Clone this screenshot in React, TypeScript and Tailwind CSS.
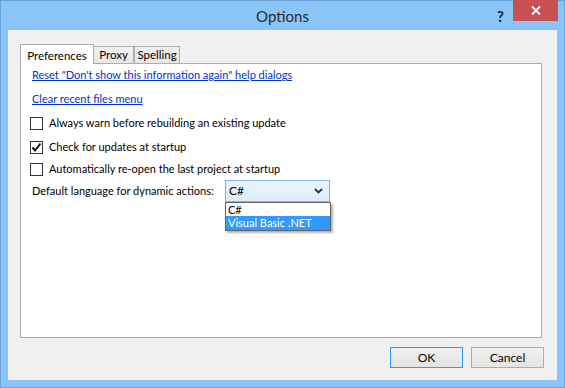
import { useState } from "react";

type CheckProps = {
  label: string;
  checked: boolean;
  onToggle: () => void;
};

const CheckRow = ({ label, checked, onToggle }: CheckProps) => {
  return (
    <div className="flex items-center gap-[6px] -ml-[2px] cursor-default" onClick={onToggle}>
      <div className="w-[13px] h-[13px] border border-[#333333] bg-white flex items-center justify-center">
        {checked && (
          <svg width="11" height="11" viewBox="0 0 11 11">
            <path d="M1.5 5.5 L4 8.5 L9.5 1.5" fill="none" stroke="#111" strokeWidth="2" />
          </svg>
        )}
      </div>
      <span>{label}</span>
    </div>
  );
};

const App = () => {
  const [checks, setChecks] = useState([false, true, false]);
  const labels = [
    "Always warn before rebuilding an existing update",
    "Check for updates at startup",
    "Automatically re-open the last project at startup",
  ];
  const heights = ["h-[25px]", "h-[23px]", "h-[21px]"];

  const toggle = (i: number) => {
    setChecks(checks.map((c, j) => (j === i ? !c : c)));
  };

  return (
    <div className="w-[565px] h-[388px] bg-[#8bc4f6] border border-[#6aa3d8] flex flex-col font-['Lato',sans-serif] text-[11px] text-[#000] whitespace-nowrap select-none">
      {/* title bar */}
      <div className="relative h-[29px] flex items-center justify-center shrink-0">
        <span className="text-[15px] text-[#2b2b2b] pt-[1px]">Options</span>
        <span className="absolute right-[60px] top-[4px] text-[15px] font-bold text-[#222]">?</span>
        <div className="absolute right-[6px] -top-[1px] w-[45px] h-[21px] bg-[#c75050] flex items-center justify-center">
          <svg width="10" height="9" viewBox="0 0 10 9">
            <path d="M1 0.5 L9 8.5 M9 0.5 L1 8.5" stroke="white" strokeWidth="2" />
          </svg>
        </div>
      </div>

      {/* client area */}
      <div className="mx-[7px] h-[350px] bg-[#f0f0f0] flex flex-col">
        {/* tabs */}
        <div className="flex items-end pl-[12px] mt-[14px] h-[19px] text-[11.5px]">
          <div className="relative z-10 h-[20px] -mb-[1px] w-[74px] bg-white border border-b-0 border-[#adadad] flex items-start justify-center pt-[2px]">
            Preferences
          </div>
          <div className="h-[17px] w-[41px] -ml-[1px] bg-gradient-to-b from-[#f2f2f2] to-[#e6e6e6] border border-b-0 border-[#adadad] flex items-center justify-center">
            Proxy
          </div>
          <div className="h-[17px] w-[46px] bg-gradient-to-b from-[#f2f2f2] to-[#e6e6e6] border border-b-0 border-[#adadad] flex items-center justify-center">
            Spelling
          </div>
        </div>

        {/* panel */}
        <div className="ml-[12px] mr-[15px] h-[275px] bg-white border border-[#adadad] flex flex-col pl-[11px]">
          <div className="h-[23px] flex items-center">
            <a className="text-[#0033cc] underline cursor-pointer">Reset "Don't show this information again" help dialogs</a>
          </div>
          <div className="h-[24px] flex items-center">
            <a className="text-[#0033cc] underline cursor-pointer">Clear recent files menu</a>
          </div>
          {labels.map((l, i) => (
            <div key={l} className={`${heights[i]} flex items-center`}>
              <CheckRow label={l} checked={checks[i]} onToggle={() => toggle(i)} />
            </div>
          ))}
          <div className="h-[22px] flex items-center">
            <span className="w-[193px] shrink-0">Default language for dynamic actions:</span>
            <div className="relative">
              <div className="w-[105px] h-[22px] border border-[#7eb4ea] bg-gradient-to-b from-[#ecf4fc] to-[#dcecfc] flex items-center justify-between pl-[3px] pr-[6px] text-[12px]">
                <span>C#</span>
                <svg width="9" height="6" viewBox="0 0 9 6">
                  <path d="M1 1 L4.5 4.5 L8 1" fill="none" stroke="#333" strokeWidth="1.8" />
                </svg>
              </div>
              <div className="absolute top-full left-0 w-[106px] bg-white border border-[#646464] shadow-[2px_2px_2px_rgba(0,0,0,0.3)] flex flex-col leading-[13px]">
                <div className="h-[13px] pl-[2px]">C#</div>
                <div className="h-[14px] pl-[2px] bg-[#3399ff] text-white">Visual Basic .NET</div>
              </div>
            </div>
          </div>
        </div>

        {/* buttons */}
        <div className="flex justify-end gap-[8px] mt-[9px] mr-[13px]">
          <button className="w-[73px] h-[21px] border border-[#3399ff] bg-gradient-to-b from-[#f0f0f0] to-[#e5e5e5] text-[12px]">
            OK
          </button>
          <button className="w-[73px] h-[21px] border border-[#acacac] bg-gradient-to-b from-[#f0f0f0] to-[#e5e5e5] text-[12px]">
            Cancel
          </button>
        </div>
      </div>
    </div>
  );
};

export default App;
